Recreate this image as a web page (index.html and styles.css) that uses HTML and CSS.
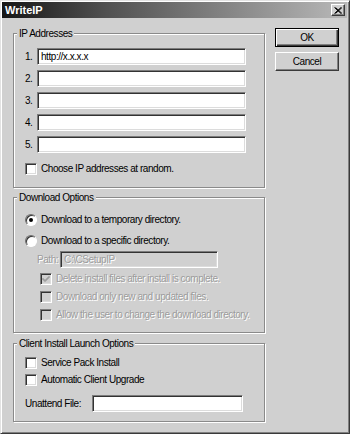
FILE: index.html
```html
<!DOCTYPE html>
<html lang="en">

<head>
    <meta charset="UTF-8">
    <title>WriteIP</title>
    <link rel="stylesheet" href="styles.css">
</head>

<body>
    <div class="window">
        <div class="titlebar">
            <span class="title">WriteIP</span>
            <span class="close">
                <svg width="8" height="7" viewBox="0 0 8 7">
                    <path d="M0.5 0.5 L7 6.5 M1.5 0.5 L8 6.5 M7 0.5 L0.5 6.5 M8 0.5 L1.5 6.5" stroke="#000" stroke-width="1" fill="none" />
                </svg>
            </span>
        </div>

        <div class="main">
            <div class="groups">
                <div class="group group-ip">
                    <div class="legend">IP Addresses</div>
                    <div class="ip-list">
                        <div class="ip-row"><span class="num">1.</span><span class="field ip-field">http://x.x.x.x</span></div>
                        <div class="ip-row"><span class="num">2.</span><span class="field ip-field"></span></div>
                        <div class="ip-row"><span class="num">3.</span><span class="field ip-field"></span></div>
                        <div class="ip-row"><span class="num">4.</span><span class="field ip-field"></span></div>
                        <div class="ip-row"><span class="num">5.</span><span class="field ip-field"></span></div>
                    </div>
                    <div class="check-row random"><span class="box"></span>Choose IP addresses at random.</div>
                </div>

                <div class="group group-download">
                    <div class="legend">Download Options</div>
                    <div class="check-row radio-first"><span class="radio checked"></span>Download to a temporary directory.</div>
                    <div class="check-row radio-second"><span class="radio"></span>Download to a specific directory.</div>
                    <div class="path-row disabled">
                        <span class="path-label">Path:</span>
                        <span class="field path-field">C:\CSetupIP</span>
                    </div>
                    <div class="check-row sub disabled first-sub">
                        <span class="box checked">
                            <svg width="8" height="7" viewBox="0 0 8 7">
                                <path d="M0.5 3 L3 5.5 L7.5 1 M0.5 4 L3 6.5 L7.5 2" stroke="#8c8c8c" stroke-width="1" fill="none" />
                            </svg>
                        </span>Delete install files after install is complete.
                    </div>
                    <div class="check-row sub disabled"><span class="box"></span>Download only new and updated files.</div>
                    <div class="check-row sub disabled"><span class="box"></span>Allow the user to change the download directory.</div>
                </div>

                <div class="group group-client">
                    <div class="legend">Client Install Launch Options</div>
                    <div class="check-row client-first"><span class="box"></span>Service Pack Install</div>
                    <div class="check-row client-second"><span class="box"></span>Automatic Client Upgrade</div>
                    <div class="unattend-row">
                        <span class="unattend-label">Unattend File:</span>
                        <span class="field unattend-field"></span>
                    </div>
                </div>
            </div>

            <div class="buttons">
                <div class="btn btn-default">OK</div>
                <div class="btn">Cancel</div>
            </div>
        </div>
    </div>
</body>

</html>
```

FILE: styles.css
```css
body {
    margin: 0;
    background: #d0d0d0;
}

.window {
    width: 350px;
    height: 434px;
    box-sizing: border-box;
    border: 1px solid;
    border-color: #e2e2e2 #3a3a3a #3a3a3a #e2e2e2;
    box-shadow: inset 1px 1px #ffffff, inset -1px -1px #808080;
    padding: 1px 2px 2px 1px;
    background: #d0d0d0;
    font-family: "Liberation Sans", Arial, sans-serif;
    font-size: 10px;
    letter-spacing: -0.45px;
    color: #000;
}

.titlebar {
    height: 16px;
    display: flex;
    align-items: center;
    justify-content: space-between;
    padding: 0 2px 0 3px;
    background: linear-gradient(to right, #161616, #505050 30%, #b8b8b8);
}

.title {
    font-weight: bold;
    font-size: 11px;
    letter-spacing: 0;
    color: #fff;
}

.close {
    width: 14px;
    height: 12px;
    box-sizing: border-box;
    border: 1px solid;
    border-color: #fff #3a3a3a #3a3a3a #fff;
    box-shadow: inset -1px -1px #808080;
    background: #d0d0d0;
    display: flex;
    align-items: center;
    justify-content: center;
}

.main {
    display: flex;
    align-items: flex-start;
}

.groups {
    width: 252px;
    margin: 15px 0 0 11px;
}

.group {
    box-sizing: border-box;
    border: 1px solid #8a8a8a;
    box-shadow: inset 1px 1px #ffffff, 1px 1px 0 #ffffff;
    padding: 0 0 0 11px;
}

.legend {
    width: fit-content;
    margin: -7px 0 0 -8px;
    padding: 0 2px;
    line-height: 13px;
    background: #d0d0d0;
}

.group-ip {
    padding-bottom: 12px;
}

.group-download {
    margin-top: 9px;
    padding-bottom: 11px;
}

.group-client {
    margin-top: 10px;
    padding-bottom: 9px;
}

/* text fields */
.field {
    display: block;
    box-sizing: border-box;
    height: 17px;
    padding: 0 3px;
    line-height: 15px;
    background: #fff;
    border: 1px solid;
    border-color: #7c7c7c #ffffff #ffffff #7c7c7c;
    box-shadow: inset 1px 1px #333333, inset -1px -1px #dcdcdc;
    white-space: nowrap;
}

.ip-list {
    margin-top: 8px;
    display: flex;
    flex-direction: column;
    gap: 5px;
}

.ip-row {
    display: flex;
    align-items: center;
}

.num {
    width: 12px;
}

.ip-field {
    width: 209px;
}

/* checkboxes and radios */
.check-row {
    height: 13px;
    display: flex;
    align-items: center;
    gap: 4px;
    white-space: nowrap;
}

.box {
    width: 12px;
    height: 12px;
    box-sizing: border-box;
    border: 1px solid;
    border-color: #7c7c7c #ffffff #ffffff #7c7c7c;
    box-shadow: inset 1px 1px #333333, inset -1px -1px #dcdcdc;
    background: #fff;
    display: flex;
    align-items: center;
    justify-content: center;
    flex: none;
}

.radio {
    width: 12px;
    height: 12px;
    box-sizing: border-box;
    border-radius: 50%;
    border: 1px solid;
    border-color: #6c6c6c #ffffff #ffffff #6c6c6c;
    box-shadow: inset 1px 1px #333333;
    background: #fff;
    display: flex;
    align-items: center;
    justify-content: center;
    flex: none;
}

.radio.checked::after {
    content: "";
    width: 4px;
    height: 4px;
    border-radius: 50%;
    background: #000;
}

.random {
    margin-top: 9px;
}

.radio-first {
    margin-top: 9px;
}

.radio-second {
    margin-top: 8px;
}

.disabled {
    color: #9c9c9c;
    text-shadow: 1px 1px 0 #ffffff;
}

.disabled .box {
    background: #d0d0d0;
}

.path-row {
    margin: 4px 0 0 12px;
    display: flex;
    align-items: center;
    gap: 2px;
}

.path-field {
    width: 158px;
    background: #d0d0d0;
}

.sub {
    margin-left: 15px;
    margin-top: 5px;
}

.first-sub {
    margin-top: 4px;
}

.client-first {
    margin-top: 6px;
}

.client-second {
    margin-top: 4px;
}

.unattend-row {
    margin-top: 9px;
    display: flex;
    align-items: center;
}

.unattend-label {
    width: 67px;
}

.unattend-field {
    width: 151px;
}

/* buttons */
.buttons {
    margin: 10px 0 0 10px;
    display: flex;
    flex-direction: column;
    gap: 5px;
}

.btn {
    width: 64px;
    height: 19px;
    box-sizing: border-box;
    border: 1px solid;
    border-color: #ffffff #3a3a3a #3a3a3a #ffffff;
    box-shadow: inset -1px -1px #808080;
    display: flex;
    align-items: center;
    justify-content: center;
}

.btn-default {
    border-color: #000;
    box-shadow: inset 1px 1px #ffffff, inset -1px -1px #3a3a3a, inset -2px -2px #808080;
}
```
